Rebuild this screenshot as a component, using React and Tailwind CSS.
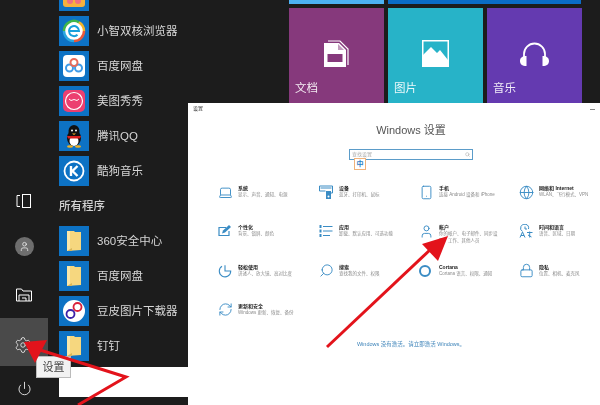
import React from 'react'
import { Settings, Power, Laptop, Smartphone, Globe, User, Search, Lock, RefreshCw } from 'lucide-react'

const font = { fontFamily: '"Liberation Sans", "Noto Sans CJK SC", sans-serif' }

// app icons drawn small, all sit on a 30x30 blue square
const Folder = () => (
    <svg viewBox="0 0 30 30" className="size-full">
        <path d="M8 5h7l1 1h6v18l-14 1z" fill="#f6d77f" />
        <path d="M8 5h3v20H8z" fill="#fbe7a8" />
        <path d="M8 25l5-3v3z" fill="#d9b65a" />
    </svg>
)

const Browser = () => (
    <svg viewBox="0 0 30 30" className="size-full">
        <circle cx="15" cy="15" r="10.500" fill="#fff" />
        <path d="M5 15a10 10 0 0 1 15-8.700" fill="none" stroke="#3fb54a" strokeWidth="2.500" />
        <path d="M20 6.300a10 10 0 0 1 5 8.700" fill="none" stroke="#f0b429" strokeWidth="2.500" />
        <path d="M25 15a10 10 0 0 1-10 10" fill="none" stroke="#e8583a" strokeWidth="2.500" />
        <path d="M15 25a10 10 0 0 1-10-10" fill="none" stroke="#2aa7e0" strokeWidth="2.500" />
        <path d="M10 15h10a5 5 0 1 0-1.500 3.700" fill="none" stroke="#18a0dc" strokeWidth="2" />
    </svg>
)

const BaiduDisk = () => (
    <svg viewBox="0 0 30 30" className="size-full">
        <rect x="4" y="4" width="22" height="22" rx="4" fill="#fff" />
        <circle cx="10.500" cy="17" r="3.500" fill="none" stroke="#3f9be8" strokeWidth="2" />
        <circle cx="19.500" cy="17" r="3.500" fill="none" stroke="#3f9be8" strokeWidth="2" />
        <circle cx="15" cy="11.500" r="3.500" fill="none" stroke="#e86a5a" strokeWidth="2" />
    </svg>
)

const Meitu = () => (
    <svg viewBox="0 0 30 30" className="size-full">
        <rect x="4" y="4" width="22" height="22" rx="5" fill="#ec3f70" />
        <circle cx="15" cy="15" r="8.500" fill="none" stroke="#fff" strokeWidth="1.200" />
        <path d="M10 13l2 1.500 3-1 3 1 2-1.500" fill="none" stroke="#fff" strokeWidth="1" />
    </svg>
)

const Penguin = () => (
    <svg viewBox="0 0 30 30" className="size-full">
        <ellipse cx="15" cy="17" rx="7" ry="8" fill="#111" />
        <ellipse cx="15" cy="10" rx="5.500" ry="6" fill="#111" />
        <ellipse cx="15" cy="20" rx="4.500" ry="5" fill="#fff" />
        <path d="M8 15h14l-1 2.500H9z" fill="#d9201c" />
        <path d="M13 12.500h4l-2 1.500z" fill="#f4b223" />
        <circle cx="13" cy="9.500" r="1" fill="#fff" />
        <circle cx="17" cy="9.500" r="1" fill="#fff" />
        <ellipse cx="11" cy="25.500" rx="3" ry="1.200" fill="#f4b223" />
        <ellipse cx="19" cy="25.500" rx="3" ry="1.200" fill="#f4b223" />
    </svg>
)

const Kugou = () => (
    <svg viewBox="0 0 30 30" className="size-full">
        <circle cx="15" cy="15" r="9.500" fill="none" stroke="#fff" strokeWidth="1.800" />
        <path d="M12 10v10M18.500 10l-5 5 5 5" fill="none" stroke="#fff" strokeWidth="2.400" />
    </svg>
)

const Infinity8 = () => (
    <svg viewBox="0 0 30 30" className="size-full">
        <circle cx="15" cy="15" r="11" fill="#fff" />
        <circle cx="11.500" cy="18" r="4" fill="none" stroke="#3b20a8" strokeWidth="1.800" />
        <circle cx="18.500" cy="11" r="4" fill="none" stroke="#d8203a" strokeWidth="1.800" />
    </svg>
)

const Top = () => (
    <svg viewBox="0 0 30 30" className="size-full">
        <rect x="4" y="0" width="22" height="26" rx="3" fill="#f5b13d" />
        <circle cx="11" cy="20" r="3" fill="#ef6f7f" />
        <circle cx="19" cy="20" r="3" fill="#ef6f7f" />
    </svg>
)

// settings icons that lucide has no close match for
const Devices = ({ className }) => (
    <svg viewBox="0 0 14 14" className={className}>
        <path d="M0.500 1h13v7h-3" fill="none" stroke="currentColor" strokeWidth="1" />
        <path d="M0.500 1v5h6" fill="none" stroke="currentColor" strokeWidth="1" />
        <rect x="1.500" y="2" width="11" height="2" fill="currentColor" opacity="0.5" />
        <rect x="7" y="6" width="5" height="8" fill="currentColor" />
        <circle cx="9.500" cy="11.500" r="1" fill="#fff" />
    </svg>
)

const Personal = ({ className }) => (
    <svg viewBox="0 0 14 14" className={className}>
        <path d="M8 3.500H1v8h10V7" fill="none" stroke="currentColor" strokeWidth="1.200" />
        <path d="M4 9.500l1-3 6-5.500 2 2-6 5.500z" fill="currentColor" />
    </svg>
)

const Apps = ({ className }) => (
    <svg viewBox="0 0 14 14" className={className} fill="currentColor">
        <rect x="0.500" y="1" width="2" height="3" />
        <rect x="0.500" y="5.500" width="2" height="3" />
        <rect x="0.500" y="10" width="2" height="3" />
        <rect x="4" y="2" width="9.500" height="1" />
        <rect x="4" y="6.500" width="9.500" height="1" />
        <rect x="4" y="11" width="7" height="1" />
    </svg>
)

const TimeLang = ({ className }) => (
    <svg viewBox="0 0 14 14" className={className} fill="none" stroke="currentColor" strokeWidth="1">
        <path d="M9.500 5a4 4 0 1 0-6 2.500" />
        <path d="M6 2.500v2.500h2" />
        <path d="M1 13.500L3.500 8 6 13.500M2 11.500h3" />
        <path d="M8 8.500h5.500M10.700 7.500v6M9 11l3.500 2" />
    </svg>
)

const Ease = ({ className }) => (
    <svg viewBox="0 0 14 14" className={className} fill="none" stroke="currentColor" strokeWidth="1.100">
        <path d="M4 2.300A5.700 5.700 0 1 0 12.700 7H7V1.300" />
    </svg>
)

const AppRow = ({ icon, label }) => (
    <div className="flex items-center h-[30px] mb-[5px]">
        <div className="w-[30px] h-[30px] bg-[#0d72c4] shrink-0">{icon}</div>
        <span className="ml-[8px] mt-px text-[11.500px] text-[#d6d6d6] whitespace-nowrap blur-[0.3px]">{label}</span>
    </div>
)

const Tile = ({ color, label, icon }) => (
    <div className={`w-[95px] h-[95px] ${color} flex flex-col items-center`}>
        <div className="h-[32px]" />
        {icon}
        <span className="self-start mt-auto mb-[6px] ml-[6px] text-[11.500px] text-white/90 blur-[0.2px]">{label}</span>
    </div>
)

const items = [
    { Icon: Laptop, title: '系统', sub: ['显示、声音、通知、电源'] },
    { Custom: Devices, title: '设备', sub: ['蓝牙、打印机、鼠标'] },
    { Icon: Smartphone, title: '手机', sub: ['连接 Android 设备和 iPhone'] },
    { Icon: Globe, title: '网络和 Internet', sub: ['WLAN、飞行模式、VPN'] },
    { Custom: Personal, title: '个性化', sub: ['背景、锁屏、颜色'] },
    { Custom: Apps, title: '应用', sub: ['卸载、默认应用、可选功能'] },
    { Icon: User, title: '帐户', sub: ['你的帐户、电子邮件、同步设', '置、工作、其他人员'] },
    { Custom: TimeLang, title: '时间和语言', sub: ['语音、区域、日期'] },
    { Custom: Ease, title: '轻松使用', sub: ['讲述人、放大镜、高对比度'] },
    { Icon: Search, flip: true, title: '搜索', sub: ['查找我的文件、权限'] },
    { Cortana: true, title: 'Cortana', sub: ['Cortana 语言、权限、通知'] },
    { Icon: Lock, title: '隐私', sub: ['位置、相机、麦克风'] },
    { Icon: RefreshCw, title: '更新和安全', sub: ['Windows 更新、恢复、备份'] },
]

const SettingItem = ({ item }) => {
    const { Icon, Custom } = item
    return (
        <div className="flex items-start h-[39.300px]">
            <div className="w-[20px] h-[14px] shrink-0 flex items-center text-[#3a8cc4] blur-[0.2px]">
                {item.Cortana && <div className="size-[12px] rounded-full border-2 border-[#3a8cc4]" />}
                {Icon && <Icon size={15} strokeWidth={1.500} className={item.flip ? '-scale-x-100' : ''} />}
                {Custom && <Custom className="size-[14px]" />}
            </div>
            <div className="blur-[0.3px]">
                <div className="text-[5px] leading-[7px] text-[#222] font-bold whitespace-nowrap">{item.title}</div>
                {item.sub.map(s => (
                    <div key={s} className="text-[4.500px] leading-[6.500px] text-[#8a8a8a] whitespace-nowrap">{s}</div>
                ))}
            </div>
        </div>
    )
}

const App = () => {
    return (
        <div style={font} className="relative w-[600px] h-[405px] overflow-hidden bg-[#1c1c1c] flex">

            {/* left rail */}
            <div className="w-12 h-full flex flex-col items-center text-white">
                <div className="h-[189px]" />
                <div className="h-[24px] flex items-center">
                    <svg viewBox="0 0 16 14" className="w-[16px] h-[14px]" fill="none" stroke="#fff" strokeWidth="1">
                        <path d="M4 1.500H1v11h3" />
                        <rect x="6.500" y="0.500" width="8" height="13" />
                    </svg>
                </div>
                <div className="h-[24px]" />
                <div className="size-[19px] rounded-full bg-[#6e6e6e] flex items-center justify-center">
                    <User size={11} strokeWidth={1.500} className="text-white" />
                </div>
                <div className="h-[29px]" />
                <div className="h-[20px] flex items-center">
                    <svg viewBox="0 0 16 14" className="w-[16px] h-[14px]" fill="none" stroke="#fff" strokeWidth="1">
                        <path d="M0.500 13V1h5l1.500 2h8.500v10z" />
                        <path d="M3 13V7h10v6M6 10h4v3" />
                    </svg>
                </div>
                <div className="h-[13px]" />
                <div className="w-12 h-[48px] bg-[#4a4a4a] flex items-center justify-center">
                    <Settings size={18} strokeWidth={1} className="-translate-x-px translate-y-[3px]" />
                </div>
                <div className="h-[15px]" />
                <Power size={15} strokeWidth={1.300} />
            </div>

            {/* app list */}
            <div className="w-[140px] h-full pl-[11px] flex flex-col">
                <div className="-mt-[19px]">
                    <AppRow icon={<Top />} label="" />
                    <AppRow icon={<Browser />} label="小智双核浏览器" />
                    <AppRow icon={<BaiduDisk />} label="百度网盘" />
                    <AppRow icon={<Meitu />} label="美图秀秀" />
                    <AppRow icon={<Penguin />} label="腾讯QQ" />
                    <AppRow icon={<Kugou />} label="酷狗音乐" />
                </div>
                <div className="h-[35px] pb-[4px] flex items-center text-[11.500px] text-[#d0d0d0] font-medium blur-[0.3px]">所有程序</div>
                <AppRow icon={<Folder />} label="360安全中心" />
                <AppRow icon={<Folder />} label="百度网盘" />
                <AppRow icon={<Infinity8 />} label="豆皮图片下载器" />
                <AppRow icon={<Folder />} label="钉钉" />
                <div className="h-[30px] bg-white mt-px" />
            </div>

            {/* right side */}
            <div className="flex-1 flex flex-col min-w-0">
                <div className="h-[103px] pl-[101px]">
                    <div className="flex gap-[4px] h-[4px]">
                        <div className="w-[95px] bg-[#4db2f2]" />
                        <div className="w-[193px] bg-[#0a6cc6]" />
                    </div>
                    <div className="flex gap-[4px] mt-[4px]">
                        <Tile color="bg-[#86397c]" label="文档" icon={
                            <svg viewBox="0 0 25 27" className="w-[25px] h-[27px]">
                                <path d="M0 3h15l7 7v17H0z" fill="#fff" />
                                <path d="M4 1h12l8 8v16" fill="none" stroke="#fff" strokeWidth="1.200" />
                                <rect x="3.500" y="14" width="15" height="8" fill="#86397c" />
                                <path d="M14 4v6h6z" fill="#86397c" opacity="0.5" />
                            </svg>
                        } />
                        <Tile color="bg-[#27b3c8]" label="图片" icon={
                            <svg viewBox="0 0 27 27" className="w-[27px] h-[27px]">
                                <rect x="0.750" y="0.750" width="25.500" height="25.500" fill="none" stroke="#fff" strokeWidth="1.500" />
                                <path d="M1 15l8-8 6 6 3-3 8 10v6H1z" fill="#fff" />
                            </svg>
                        } />
                        <Tile color="bg-[#643ab0]" label="音乐" icon={
                            <svg viewBox="0 0 29 27" className="w-[29px] h-[27px]">
                                <path d="M4 19V14a10.500 10.500 0 0 1 21 0v5" fill="none" stroke="#fff" strokeWidth="1.800" />
                                <path d="M6.500 16v10C2 26 0 24 0 21s2-5 6.500-5zM22.500 16v10c4.500 0 6.500-2 6.500-5s-2-5-6.500-5z" fill="#fff" />
                            </svg>
                        } />
                    </div>
                </div>

                {/* settings window */}
                <div className="flex-1 bg-white overflow-hidden">
                    <div className="w-[412px] h-[12px] px-[5px] flex items-center justify-between">
                        <span className="text-[5px] text-[#333] blur-[0.2px]">设置</span>
                        <span className="w-[5px] h-px bg-[#888]" />
                    </div>
                    <div className="w-[446px] flex flex-col items-center">
                        <div className="mt-[8px] h-[14px] leading-[14px] text-[11px] text-[#555] whitespace-nowrap blur-[0.3px]">Windows 设置</div>
                        <div className="relative mt-[12px] w-[124px] h-[11px] border border-[#5b9cc9] flex items-center px-[2px]">
                            <span className="text-[5px] text-[#aaa] blur-[0.2px]">查找设置</span>
                            <Search size={5} className="ml-auto text-[#999]" />
                            <div className="absolute left-[4px] top-[8px] size-[12px] bg-white border border-[#f0b27a] flex items-center justify-center text-[7px] text-[#2f7fc4] font-bold">中</div>
                        </div>
                    </div>
                    <div className="mt-[25px] ml-[30px] grid grid-cols-[101px_100px_100px_100px]">
                        {items.map(it => <SettingItem key={it.title} item={it} />)}
                    </div>
                    <div className="w-[446px] text-center mt-[-2px] text-[5.500px] text-[#3b82b8] whitespace-nowrap blur-[0.2px]">
                        Windows 没有激活。请立即激活 Windows。
                    </div>
                </div>
            </div>

            {/* tooltip over the rail */}
            <div className="absolute left-[36px] top-[356px] w-[35px] h-[22px] bg-[#f2f2f2] border border-[#bbb] flex items-center justify-center text-[11px] text-[#444] blur-[0.2px]">设置</div>

            {/* red annotation arrows */}
            <svg className="absolute inset-0 pointer-events-none" width="600" height="405" viewBox="0 0 600 405">
                <path d="M327 347L432 248" stroke="#e3131b" strokeWidth="3" fill="none" />
                <path d="M448 236L422 244L438 261z" fill="#e3131b" />
                <path d="M78 405L126 377L40 350" stroke="#e3131b" strokeWidth="3" fill="none" />
                <path d="M24 342L47 340L35 363z" fill="#e3131b" />
            </svg>
        </div>
    )
}

export default App
